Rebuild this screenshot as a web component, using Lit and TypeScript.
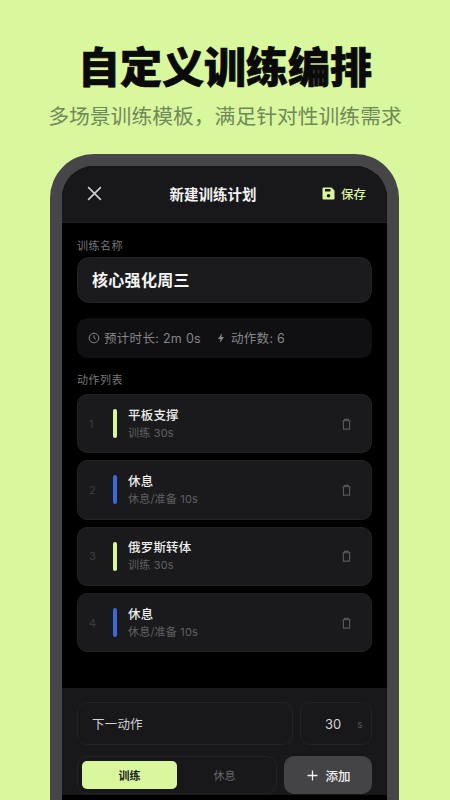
import { LitElement, html, css, svg } from "lit";
import { customElement } from "lit/decorators.js";

const items = [
  { n: 1, name: "平板支撑", sub: "训练 30s", rest: false },
  { n: 2, name: "休息", sub: "休息/准备 10s", rest: true },
  { n: 3, name: "俄罗斯转体", sub: "训练 30s", rest: false },
  { n: 4, name: "休息", sub: "休息/准备 10s", rest: true },
];

const trash = svg`<path d="M2.5 3.5h9M5 3.5V2h4v1.5M3.7 3.5v9h6.6v-9" fill="none" stroke="currentColor" stroke-width="1.2"/>`;

@customElement("app-root")
export class AppRoot extends LitElement {
  static styles = css`
    :host { display: block; width: 450px; height: 800px; overflow: hidden; background: #d9f79d;
      font-family: "Inter", "Noto Sans CJK SC", sans-serif; }
    * { box-sizing: border-box; }
    .hero { height: 154px; display: flex; flex-direction: column; align-items: center; padding-top: 35px; }
    h1 { margin: 0; height: 60px; line-height: 60px; font-size: 42px; font-weight: 900; color: #0a0a0a;
      -webkit-text-stroke: 0.7px #0a0a0a; font-family: "Noto Sans CJK SC", sans-serif; }
    .subtitle { margin-top: 3px; height: 34px; line-height: 34px; font-size: 20.8px; color: #70895a;
      font-family: "Noto Sans CJK SC", sans-serif; }
    .phone { margin-left: 50px; width: 349px; height: 646px; padding: 12px 12px 0; background: #464648;
      border-radius: 44px 44px 0 0; }
    .screen { height: 634px; background: #000; border-radius: 32px 32px 0 0; overflow: hidden; display: flex; flex-direction: column; }
    .top { height: 57px; flex: none; background: #18181a; display: flex; align-items: center; padding: 0 21px 2px 24px; justify-content: space-between; border-bottom: 1px solid #1f1f21; }
    .close { width: 17px; height: 17px; color: #c9c9cb; display: block; }
    .title { font-size: 14.5px; font-weight: 700; color: #f2f2f2; margin-left: 1px; }
    .save { display: flex; align-items: center; gap: 6px; color: #d9f79d; font-size: 12.5px; font-weight: 500; }
    .save svg { width: 13px; height: 13px; display: block; }
    .body { flex: 1; padding: 15px 15px 0; display: flex; flex-direction: column; }
    .label { font-size: 11px; line-height: 16px; height: 16px; color: #77777a; letter-spacing: 0.5px; }
    .name { margin-top: 3px; height: 46px; border-radius: 12px; background: #1b1b1d; border: 1px solid #232325; display: flex; align-items: center; padding: 0 0 2px 14px; font-size: 16px; font-weight: 700; color: #f5f5f5; letter-spacing: 0.3px; }
    .stats { margin-top: 15px; height: 40px; border-radius: 10px; background: #101012; display: flex; align-items: center; padding: 0 0 1px 11px; font-size: 12.5px; letter-spacing: 0.3px; color: #86868a; }
    .stat { display: flex; align-items: center; gap: 4px; }
    .stat svg { width: 12px; height: 12px; display: block; flex: none; }
    .stat + .stat { margin-left: 14px; }
    .list-label { margin-top: 14px; }
    .list { margin-top: 6px; display: flex; flex-direction: column; gap: 7px; }
    .card { height: 59.33px; background: #1a1a1c; border: 1px solid #222224; border-radius: 10px; display: flex; align-items: center; padding: 0 18px 0 11px; }
    .num { width: 24px; font-size: 11px; color: #3c3c3e; }
    .bar { width: 3.5px; height: 29px; border-radius: 2px; background: #d9f79d; flex: none; }
    .bar.rest { background: #3f68d4; }
    .text { margin-left: 11.5px; flex: 1; display: flex; flex-direction: column; }
    .nm { font-size: 12.5px; line-height: 18px; font-weight: 500; color: #eeeeee; letter-spacing: 0.2px; }
    .sub { font-size: 11px; line-height: 16px; color: #5f5f62; letter-spacing: 0.2px; }
    .del { width: 13px; height: 14px; color: #58585b; display: block; }
    .spacer { flex: 1; }
    .panel { height: 107px; flex: none; background: #18181a; padding: 14px 15px 0; margin-bottom: 5px; }
    .row1 { display: flex; gap: 7px; height: 43px; }
    .box { border: 1px solid #232325; border-radius: 10px; display: flex; align-items: center; }
    .next { flex: 1; padding-left: 14px; font-size: 12.5px; color: #d2d2d4; letter-spacing: 0.2px; }
    .secs { width: 72px; padding-left: 24px; font-size: 13px; color: #d2d2d4; }
    .secs small { margin-left: 16px; font-size: 10px; color: #58585b; }
    .row2 { display: flex; gap: 7px; margin-top: 11px; height: 38px; }
    .seg { width: 200px; padding: 4px; align-items: stretch; }
    .seg div { flex: 1; display: flex; align-items: center; justify-content: center; font-size: 11px; color: #66666a; border-radius: 5px; }
    .seg .on { background: #d9f79d; color: #20241a; font-weight: 700; }
    .add { flex: 1; background: #444447; border-radius: 10px; display: flex; align-items: center; justify-content: center; gap: 7px; padding-left: 2px; color: #f0f0f0; font-size: 12.5px; font-weight: 500; }
    .add svg { width: 11px; height: 11px; display: block; }
  `;

  render() {
    return html`
      <div class="hero">
        <h1>自定义训练编排</h1>
        <div class="subtitle">多场景训练模板，满足针对性训练需求</div>
      </div>
      <div class="phone">
        <div class="screen">
          <div class="top">
            <svg class="close" viewBox="0 0 16 16"><path d="M2 2l12 12M14 2L2 14" fill="none" stroke="currentColor" stroke-width="1.6"/></svg>
            <div class="title">新建训练计划</div>
            <div class="save">
              <svg viewBox="0 0 13 13"><path fill-rule="evenodd" fill="currentColor" d="M1.5 0.5h8l3 3v8a1 1 0 0 1-1 1h-10a1 1 0 0 1-1-1v-10a1 1 0 0 1 1-1zM3 2v2.5h5.5V2zM6.5 7a1.8 1.8 0 1 0 0 3.6 1.8 1.8 0 0 0 0-3.6z"/></svg>
              保存
            </div>
          </div>
          <div class="body">
            <div class="label">训练名称</div>
            <div class="name">核心强化周三</div>
            <div class="stats">
              <div class="stat">
                <svg viewBox="0 0 12 12"><circle cx="6" cy="6" r="4.8" fill="none" stroke="currentColor" stroke-width="1"/><path d="M6 3.2V6l1.8 1.2" fill="none" stroke="currentColor" stroke-width="1"/></svg>
                预计时长: 2m 0s
              </div>
              <div class="stat">
                <svg viewBox="0 0 12 12"><path fill="currentColor" d="M7 1L3 7h2.5L4.8 11 9 5H6.4z"/></svg>
                动作数: 6
              </div>
            </div>
            <div class="label list-label">动作列表</div>
            <div class="list">
              ${items.map(
                (i) => html`<div class="card">
                  <div class="num">${i.n}</div>
                  <div class="bar ${i.rest ? "rest" : ""}"></div>
                  <div class="text"><div class="nm">${i.name}</div><div class="sub">${i.sub}</div></div>
                  <svg class="del" viewBox="0 0 14 14">${trash}</svg>
                </div>`
              )}
            </div>
            <div class="spacer"></div>
          </div>
          <div class="panel">
            <div class="row1">
              <div class="box next">下一动作</div>
              <div class="box secs">30<small>s</small></div>
            </div>
            <div class="row2">
              <div class="box seg"><div class="on">训练</div><div>休息</div></div>
              <div class="add">
                <svg viewBox="0 0 11 11"><path d="M5.5 0.5v10M0.5 5.5h10" stroke="currentColor" stroke-width="1.3" fill="none"/></svg>
                添加
              </div>
            </div>
          </div>
        </div>
      </div>
    `;
  }
}
